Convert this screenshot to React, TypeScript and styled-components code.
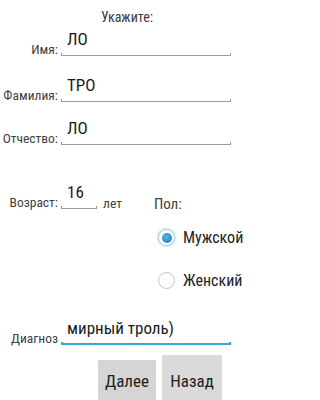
import React from "react";
import styled, { createGlobalStyle } from "styled-components";

const GlobalStyle = createGlobalStyle`
  html, body {
    margin: 0;
    padding: 0;
    background: #ffffff;
  }
`;

const Page = styled.div`
  width: 267px;
  height: 400px;
  overflow: hidden;
  background: #ffffff;
  font-family: "Roboto Condensed", "Liberation Sans Narrow", Roboto, "Liberation Sans", sans-serif;
  color: #3a3a3a;
`;

const Title = styled.div`
  padding: 9px 13px 0 0;
  height: 17px;
  text-align: center;
  font-size: 14px;
  line-height: 16px;
  color: #3a3a3a;
`;

const FieldRow = styled.div<{ $top: number }>`
  display: grid;
  grid-template-columns: 58px 170px;
  column-gap: 3px;
  align-items: end;
  height: 30px;
  margin-top: ${(p) => p.$top}px;
`;

const Label = styled.div`
  text-align: right;
  font-size: 13.5px;
  line-height: 15px;
  margin-bottom: -1px;
  white-space: nowrap;
  color: #404040;
`;

const Field = styled.div`
  display: flex;
  flex-direction: column;
`;

const Value = styled.div`
  padding: 0 0 5px 6px;
  font-size: 17px;
  line-height: 18px;
  color: #1a1a1a;
  white-space: nowrap;
`;

const Line = styled.div<{ $active?: boolean }>`
  height: 3px;
  border: ${(p) => (p.$active ? "2px solid #3aa6cf" : "1px solid #9a9a9a")};
  border-top: 0;
  box-sizing: border-box;
`;

const AgeRow = styled.div`
  display: flex;
  align-items: flex-end;
  height: 30px;
  margin-top: 34px;
`;

const AgeLabel = styled(Label)`
  width: 58px;
  margin-right: 3px;
`;

const AgeField = styled(Field)`
  width: 36px;
`;

const Unit = styled.div`
  margin: 0 0 -2px 6px;
  font-size: 13.5px;
  line-height: 15px;
  color: #404040;
`;

const SexLabel = styled.div`
  margin: 0 0 -4px 32px;
  font-size: 15px;
  line-height: 17px;
  color: #404040;
`;

const RadioGroup = styled.div`
  display: flex;
  flex-direction: column;
  gap: 26px;
  margin: 20px 0 0 158px;
`;

const RadioOption = styled.div`
  display: flex;
  align-items: center;
  gap: 8px;
  height: 17px;
`;

const RadioCircle = styled.div<{ $checked?: boolean }>`
  width: 17px;
  height: 17px;
  box-sizing: border-box;
  border-radius: 50%;
  display: flex;
  align-items: center;
  justify-content: center;
  background: #ffffff;
  border: ${(p) => (p.$checked ? "1.5px solid #b9c9d2" : "1.5px solid #c4c4c4")};
  box-shadow: ${(p) => (p.$checked ? "0 0 2px 1px rgba(120, 200, 240, 0.45)" : "none")};

  &::after {
    content: "";
    display: ${(p) => (p.$checked ? "block" : "none")};
    width: 10px;
    height: 10px;
    border-radius: 50%;
    background: radial-gradient(circle at 40% 40%, #52b8e8 0%, #1d86c4 80%);
  }
`;

const RadioText = styled.div`
  font-size: 16px;
  line-height: 17px;
  color: #222;
`;

const Buttons = styled.div`
  display: flex;
  align-items: flex-start;
  gap: 6px;
  margin: 10px 0 0 98px;
`;

const Button = styled.button<{ $raised?: boolean }>`
  display: flex;
  justify-content: center;
  align-items: flex-start;
  width: ${(p) => (p.$raised ? 60 : 58)}px;
  height: 50px;
  margin-top: ${(p) => (p.$raised ? 0 : 5)}px;
  padding: ${(p) => (p.$raised ? 16 : 11)}px 0 0;
  border: none;
  border-radius: 1px;
  background: ${(p) => (p.$raised ? "#dadada" : "#d5d5d5")};
  font-family: inherit;
  font-size: 17px;
  line-height: 20px;
  color: #1e1e1e;
`;

export default function App() {
  return (
    <Page>
      <GlobalStyle />
      <Title>Укажите:</Title>

      <FieldRow $top={0}>
        <Label>Имя:</Label>
        <Field>
          <Value>ЛО</Value>
          <Line />
        </Field>
      </FieldRow>

      <FieldRow $top={16}>
        <Label>Фамилия:</Label>
        <Field>
          <Value>ТРО</Value>
          <Line />
        </Field>
      </FieldRow>

      <FieldRow $top={13}>
        <Label>Отчество:</Label>
        <Field>
          <Value>ЛО</Value>
          <Line />
        </Field>
      </FieldRow>

      <AgeRow>
        <AgeLabel>Возраст:</AgeLabel>
        <AgeField>
          <Value>16</Value>
          <Line />
        </AgeField>
        <Unit>лет</Unit>
        <SexLabel>Пол:</SexLabel>
      </AgeRow>

      <RadioGroup>
        <RadioOption>
          <RadioCircle $checked />
          <RadioText>Мужской</RadioText>
        </RadioOption>
        <RadioOption>
          <RadioCircle />
          <RadioText>Женский</RadioText>
        </RadioOption>
      </RadioGroup>

      <FieldRow $top={26}>
        <Label>Диагноз</Label>
        <Field>
          <Value>мирный троль)</Value>
          <Line $active />
        </Field>
      </FieldRow>

      <Buttons>
        <Button>Далее</Button>
        <Button $raised>Назад</Button>
      </Buttons>
    </Page>
  );
}
